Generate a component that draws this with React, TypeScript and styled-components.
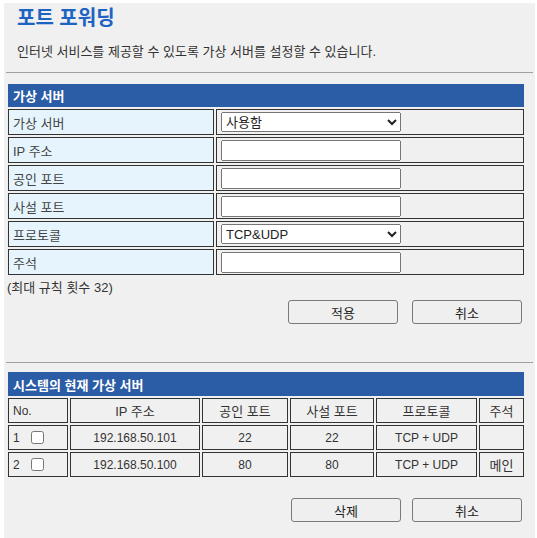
import React from "react";
import styled, { createGlobalStyle } from "styled-components";

const FONT = `"Liberation Sans", "Noto Sans CJK KR", Arial, sans-serif`;

const GlobalStyle = createGlobalStyle`
  html, body { margin: 0; padding: 0; background: #ffffff; }
  body { font-family: ${FONT}; font-size: 13px; color: #333333; }
`;

const Panel = styled.div`
  box-sizing: border-box;
  margin: 3px 0 0 4px;
  width: 531px;
  height: 535px;
  padding: 3px 2px 0 2px;
  background: #f0f0f0;
`;

const Title = styled.h1`
  margin: 0 0 0 11px;
  font-size: 20px;
  line-height: 24px;
  font-weight: bold;
  color: #1d63c3;
`;

const Description = styled.p`
  margin: 14px 0 0 11px;
  line-height: 16px;
  color: #333333;
`;

const Rule = styled.div<{ $top: number }>`
  height: 1px;
  background: #a0a0a0;
  margin-top: ${(p) => p.$top}px;
`;

const Grid = styled.div<{ $cols: string; $top: number }>`
  display: grid;
  grid-template-columns: ${(p) => p.$cols};
  gap: 2px;
  padding: 2px;
  width: max-content;
  margin-top: ${(p) => p.$top}px;
`;

const SectionBar = styled.div<{ $h: number }>`
  grid-column: 1 / -1;
  height: ${(p) => p.$h}px;
  background: #2b5ca6;
  color: #ffffff;
  font-weight: bold;
  display: flex;
  align-items: center;
  padding-left: 5px;
`;

const Cell = styled.div<{ $h: number; $align?: "left" | "center"; $label?: boolean; $small?: boolean }>`
  box-sizing: border-box;
  height: ${(p) => p.$h}px;
  border: 1px solid #333333;
  background: ${(p) => (p.$label ? "#e6f5fd" : "transparent")};
  color: ${(p) => (p.$label ? "#444444" : "#333333")};
  font-size: ${(p) => (p.$small ? 12 : 13)}px;
  display: flex;
  align-items: center;
  justify-content: ${(p) => (p.$align === "center" ? "center" : "flex-start")};
  padding: 0 4px;
  white-space: nowrap;
`;

const Select = styled.select`
  box-sizing: border-box;
  width: 180px;
  height: 20px;
  font-family: ${FONT};
  font-size: 13px;
  color: #222222;
`;

const TextInput = styled.input`
  box-sizing: border-box;
  width: 180px;
  height: 21px;
  font-family: ${FONT};
  font-size: 13px;
`;

const Note = styled.div`
  margin: 3px 0 0 1px;
  line-height: 16px;
`;

const ButtonRow = styled.div<{ $top: number; $gap: number; $right: number }>`
  display: flex;
  justify-content: flex-end;
  gap: ${(p) => p.$gap}px;
  margin-top: ${(p) => p.$top}px;
  padding-right: ${(p) => p.$right}px;
`;

const Button = styled.button`
  box-sizing: border-box;
  width: 110px;
  height: 24px;
  font-family: ${FONT};
  font-size: 13px;
  color: #222222;
  background: #efefef;
  border: 1px solid #7a7a7a;
  border-radius: 3px;
  padding: 0;
`;

const Check = styled.input`
  margin: 0 0 0 11px;
  width: 13px;
  height: 13px;
`;

const formRows: { label: string; kind: "select" | "input"; options?: string[] }[] = [
  { label: "가상 서버", kind: "select", options: ["사용함", "사용 안 함"] },
  { label: "IP 주소", kind: "input" },
  { label: "공인 포트", kind: "input" },
  { label: "사설 포트", kind: "input" },
  { label: "프로토콜", kind: "select", options: ["TCP&UDP", "TCP", "UDP"] },
  { label: "주석", kind: "input" },
];

const listHead = ["No.", "IP 주소", "공인 포트", "사설 포트", "프로토콜", "주석"];
const listRows = [
  { no: "1", ip: "192.168.50.101", pub: "22", priv: "22", proto: "TCP + UDP", note: "" },
  { no: "2", ip: "192.168.50.100", pub: "80", priv: "80", proto: "TCP + UDP", note: "메인" },
];

export default function App() {
  return (
    <>
      <GlobalStyle />
      <Panel>
        <Title>포트 포워딩</Title>
        <Description>인터넷 서비스를 제공할 수 있도록 가상 서버를 설정할 수 있습니다.</Description>
        <Rule $top={12} />

        <Grid $cols="206px 308px" $top={9}>
          <SectionBar $h={23}>가상 서버</SectionBar>
          {formRows.map((r) => (
            <React.Fragment key={r.label}>
              <Cell $h={26} $label>{r.label}</Cell>
              <Cell $h={26}>
                {r.kind === "select" ? (
                  <Select defaultValue={r.options![0]}>
                    {r.options!.map((o) => (
                      <option key={o}>{o}</option>
                    ))}
                  </Select>
                ) : (
                  <TextInput type="text" />
                )}
              </Cell>
            </React.Fragment>
          ))}
        </Grid>
        <Note>(최대 규칙 횟수 32)</Note>
        <ButtonRow $top={4} $gap={14} $right={11}>
          <Button>적용</Button>
          <Button>취소</Button>
        </ButtonRow>

        <Rule $top={38} />

        <Grid $cols="60px 130px 86px 84px 101px 45px" $top={7}>
          <SectionBar $h={24}>시스템의 현재 가상 서버</SectionBar>
          {listHead.map((h, i) => (
            <Cell key={h} $h={25} $small={i === 0} $align={i === 0 ? "left" : "center"}>{h}</Cell>
          ))}
          {listRows.map((r) => (
            <React.Fragment key={r.no}>
              <Cell $h={25} $small>
                {r.no}
                <Check type="checkbox" />
              </Cell>
              <Cell $h={25} $small $align="center">{r.ip}</Cell>
              <Cell $h={25} $small $align="center">{r.pub}</Cell>
              <Cell $h={25} $small $align="center">{r.priv}</Cell>
              <Cell $h={25} $small $align="center">{r.proto}</Cell>
              <Cell $h={25} $align="center">{r.note}</Cell>
            </React.Fragment>
          ))}
        </Grid>
        <ButtonRow $top={19} $gap={11} $right={11}>
          <Button>삭제</Button>
          <Button>취소</Button>
        </ButtonRow>
      </Panel>
    </>
  );
}
